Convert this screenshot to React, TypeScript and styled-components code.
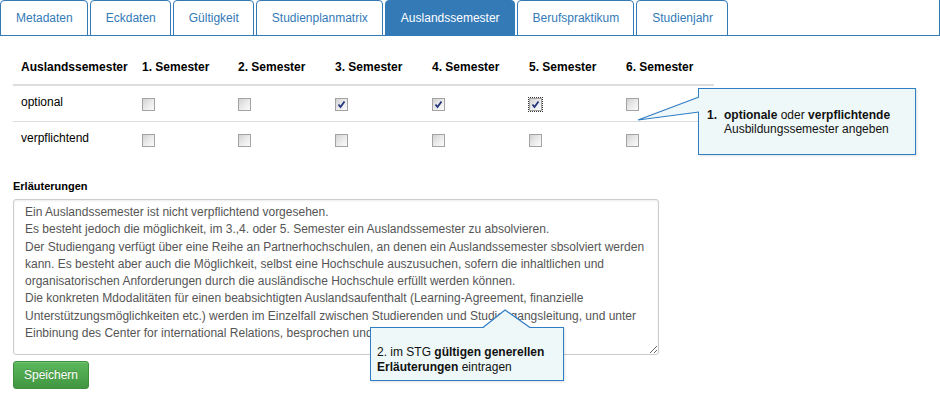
import React from "react";
import styled, { createGlobalStyle, css } from "styled-components";

const GlobalStyle = createGlobalStyle`
  html, body {
    margin: 0;
    padding: 0;
    background: #fff;
  }
  body {
    font-family: "Liberation Sans", Arial, sans-serif;
    font-size: 12px;
    color: #333;
  }
`;

const Page = styled.div`
  position: relative;
  width: 940px;
  height: 396px;
  overflow: hidden;
`;

const TabBar = styled.ul`
  display: flex;
  margin: 0;
  padding: 0;
  list-style: none;
  height: 36px;
  box-sizing: border-box;
  border-bottom: 1px solid #337ab7;
  border-right: 1px solid #337ab7;
`;

const Tab = styled.li<{ $active?: boolean }>`
  box-sizing: border-box;
  height: 36px;
  margin-right: 2px;
  margin-bottom: -1px;
  padding: 0 14px 0 15px;
  line-height: 35px;
  font-size: 12px;
  border: 1px solid #337ab7;
  border-radius: 4px 4px 0 0;
  color: #337ab7;
  background: #fff;
  white-space: nowrap;
  ${(p) =>
    p.$active &&
    css`
      background: #337ab7;
      color: #fff;
    `}
`;

const Content = styled.div`
  padding: 15px 13px 0 13px;
`;

const Matrix = styled.table`
  border-collapse: collapse;
  table-layout: fixed;
  width: 701px;
  font-size: 12px;
  color: #000;
`;

const Col = styled.col<{ $w: number }>`
  width: ${(p) => p.$w}px;
`;

const HeadCell = styled.th`
  text-align: left;
  font-weight: bold;
  padding: 8px;
  line-height: 17px;
  border-bottom: 2px solid #ddd;
  white-space: nowrap;
`;

const Cell = styled.td`
  padding: 8px;
  line-height: 17px;
  vertical-align: top;
  border-top: 1px solid #ddd;
  ${"tr:first-child > &"} {
    border-top: none;
  }
`;

const Check = styled.span<{ $focus?: boolean }>`
  display: block;
  box-sizing: border-box;
  width: 13px;
  height: 13px;
  margin: 4px 0 2px;
  border: 1px solid #a3a3a3;
  background: linear-gradient(135deg, #d2d2d2 0%, #ececec 55%, #fbfbfb 100%);
  position: relative;
  ${(p) =>
    p.$focus &&
    css`
      outline: 1px dotted #333;
      outline-offset: 0;
    `}
  svg {
    position: absolute;
    left: 1px;
    top: 1px;
  }
`;

const FieldLabel = styled.label`
  display: block;
  margin: 22px 0 5px;
  font-size: 11px;
  font-weight: bold;
  line-height: 15px;
  color: #000;
`;

const Notes = styled.textarea`
  display: block;
  box-sizing: border-box;
  width: 646px;
  height: 156px;
  margin: 0;
  padding: 4px 11px 2px;
  font-family: "Liberation Sans", Arial, sans-serif;
  font-size: 12px;
  line-height: 17.3px;
  color: #555;
  border: 1px solid #ccc;
  border-radius: 3px;
  box-shadow: inset 0 1px 2px rgba(0, 0, 0, 0.08);
  resize: vertical;
  overflow: hidden;
  white-space: pre-wrap;
`;

const SaveButton = styled.button`
  display: block;
  margin-top: 6px;
  width: 76px;
  height: 28px;
  padding: 0;
  font-family: "Liberation Sans", Arial, sans-serif;
  font-size: 12px;
  color: #fff;
  background: linear-gradient(to bottom, #5cb85c 0%, #419641 100%);
  border: 1px solid #3e8f3e;
  border-radius: 3px;
  text-shadow: 0 -1px 0 rgba(0, 0, 0, 0.2);
  box-shadow: inset 0 1px 0 rgba(255, 255, 255, 0.15);
`;

const Callout = styled.div<{ $x: number; $y: number; $w: number; $h: number }>`
  position: absolute;
  left: ${(p) => p.$x}px;
  top: ${(p) => p.$y}px;
  width: ${(p) => p.$w}px;
  height: ${(p) => p.$h}px;
  box-sizing: border-box;
  background: #eef8f8;
  border: 1px solid #2f7dc4;
  font-size: 12px;
  color: #111;
  box-shadow: 1px 1px 2px rgba(0, 0, 0, 0.12);
`;

const StepList = styled.div`
  display: grid;
  grid-template-columns: 17px auto;
  align-content: center;
  height: 100%;
  padding-left: 8px;
  line-height: 14px;
`;

const StepNo = styled.b`
  font-weight: bold;
`;

const CalloutText = styled.div`
  padding: 17px 7px 0 6px;
  line-height: 14.5px;
`;

const Pointer = styled.svg<{ $x: number; $y: number }>`
  position: absolute;
  left: ${(p) => p.$x}px;
  top: ${(p) => p.$y}px;
  overflow: visible;
`;

const columns = [121, 96, 97, 97, 97, 97, 96];

const rows: { label: string; checked: boolean[] }[] = [
  { label: "optional", checked: [false, false, true, true, true, false] },
  { label: "verpflichtend", checked: [false, false, false, false, false, false] },
];

const notes = `Ein Auslandssemester ist nicht verpflichtend vorgesehen.
Es besteht jedoch die möglichkeit, im 3.,4. oder 5. Semester ein Auslandssemester zu absolvieren.
Der Studiengang verfügt über eine Reihe an Partnerhochschulen, an denen ein Auslandssemester sbsolviert werden
kann. Es besteht aber auch die Möglichkeit, selbst eine Hochschule auszusuchen, sofern die inhaltlichen und
organisatorischen Anforderungen durch die ausländische Hochschule erfüllt werden können.
Die konkreten Mdodalitäten für einen beabsichtigten Auslandsaufenthalt (Learning-Agreement, finanzielle
Unterstützungsmöglichkeiten etc.) werden im Einzelfall zwischen Studierenden und Studiengangsleitung, und unter
Einbinung des Center for international Relations, besprochen und abgestimmt.`;

const tabs = [
  "Metadaten",
  "Eckdaten",
  "Gültigkeit",
  "Studienplanmatrix",
  "Auslandssemester",
  "Berufspraktikum",
  "Studienjahr",
];

const CheckMark = () => (
  <svg width="9" height="9" viewBox="0 0 9 9">
    <path d="M1.5 4.5 L3.5 7 L7.5 1.5" fill="none" stroke="#24367f" strokeWidth="1.8" />
  </svg>
);

const App = () => {
  return (
    <Page>
      <GlobalStyle />
      <TabBar>
        {tabs.map((t) => (
          <Tab key={t} $active={t === "Auslandssemester"}>
            {t}
          </Tab>
        ))}
      </TabBar>
      <Content>
        <Matrix>
          <colgroup>
            {columns.map((w, i) => (
              <Col key={i} $w={w} />
            ))}
          </colgroup>
          <thead>
            <tr>
              <HeadCell>Auslandssemester</HeadCell>
              {[1, 2, 3, 4, 5, 6].map((n) => (
                <HeadCell key={n}>{n}. Semester</HeadCell>
              ))}
            </tr>
          </thead>
          <tbody>
            {rows.map((r) => (
              <tr key={r.label}>
                <Cell>{r.label}</Cell>
                {r.checked.map((c, i) => (
                  <Cell key={i}>
                    <Check $focus={r.label === "optional" && i === 4}>
                      {c && <CheckMark />}
                    </Check>
                  </Cell>
                ))}
              </tr>
            ))}
          </tbody>
        </Matrix>
        <FieldLabel>Erläuterungen</FieldLabel>
        <Notes readOnly defaultValue={notes} />
        <SaveButton>Speichern</SaveButton>
      </Content>

      <Callout $x={698} $y={88} $w={218} $h={67}>
        <StepList>
          <StepNo>1.</StepNo>
          <span>
            <b>optionale</b> oder <b>verpflichtende</b>
          </span>
          <span />
          <span>Ausbildungssemester angeben</span>
        </StepList>
      </Callout>
      <Pointer $x={637} $y={96} width="63" height="26" viewBox="0 0 63 26">
        <polygon points="62,1 1,24 62,16" fill="#eef8f8" />
        <polyline points="62,1 1,24 62,16" fill="none" stroke="#2f7dc4" strokeWidth="1.2" />
      </Pointer>

      <Callout $x={370} $y={327} $w={194} $h={54}>
        <CalloutText>
          2. im STG <b>gültigen generellen</b>
          <br />
          <b>Erläuterungen</b> eintragen
        </CalloutText>
      </Callout>
      <Pointer $x={482} $y={309} width="50" height="20" viewBox="0 0 50 20">
        <polygon points="1,19 23,1 48,19" fill="#eef8f8" />
        <polyline points="1,18.5 23,1 48,18.5" fill="none" stroke="#2f7dc4" strokeWidth="1.2" />
      </Pointer>
    </Page>
  );
};

export default App;
